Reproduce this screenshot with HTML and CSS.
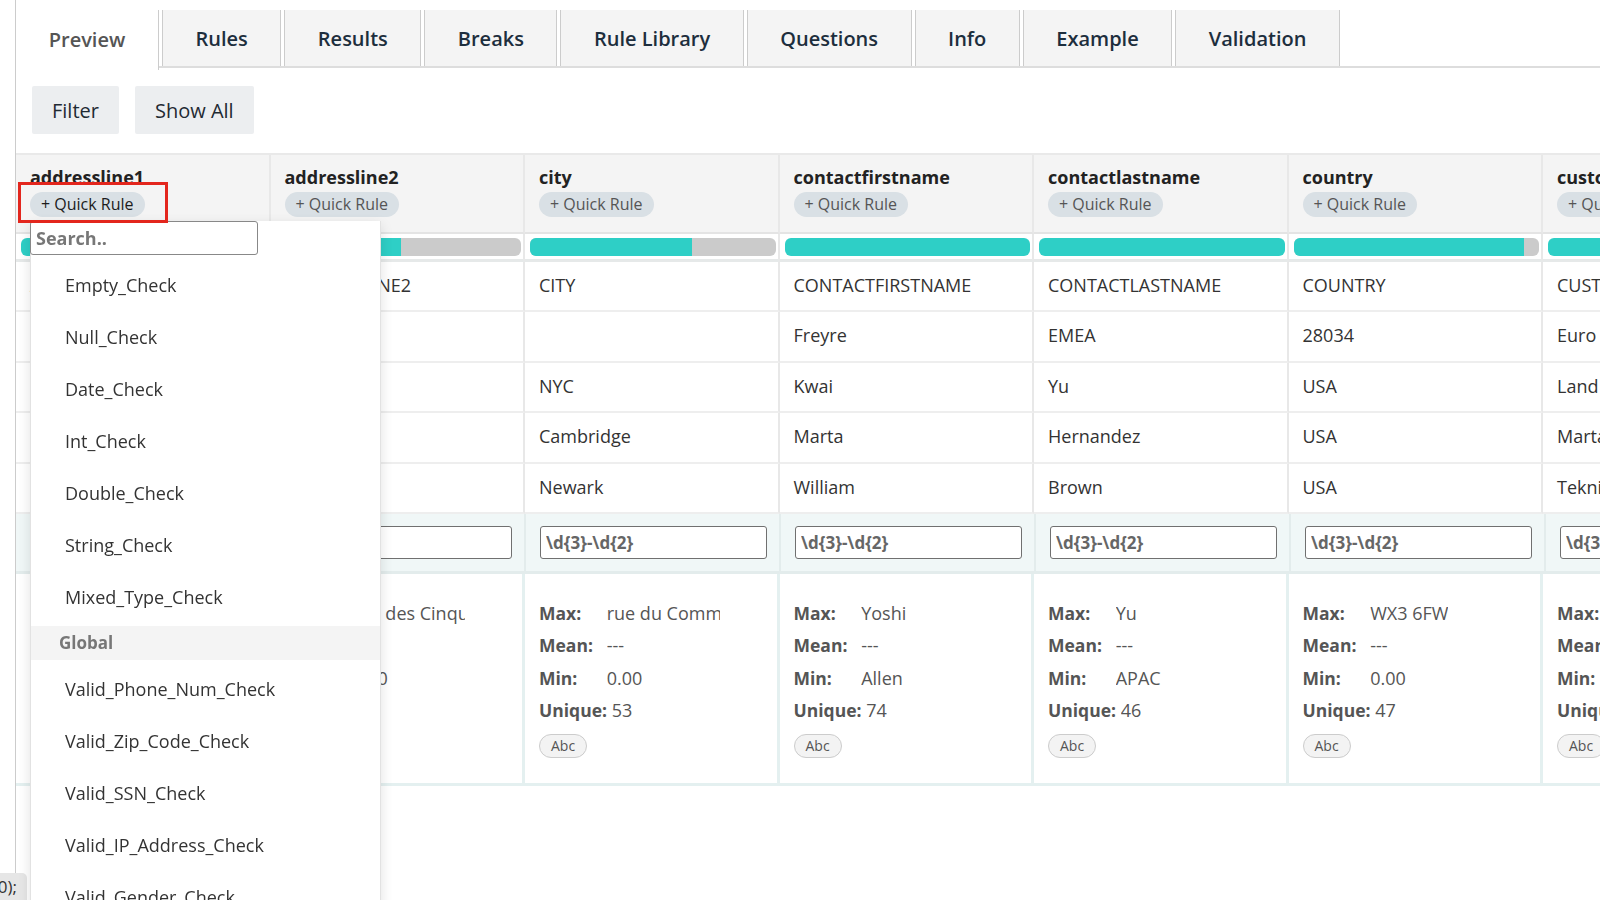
FILE: index.html
```html
<!DOCTYPE html>
<html lang="en">
<head>
    <meta charset="UTF-8">
    <title>Preview</title>
    <link rel="stylesheet" href="styles.css">
</head>
<body>
<div class="panel">
    <div class="tabs">
        <div class="tab active">Preview</div>
        <div class="tab">Rules</div>
        <div class="tab">Results</div>
        <div class="tab">Breaks</div>
        <div class="tab">Rule Library</div>
        <div class="tab">Questions</div>
        <div class="tab">Info</div>
        <div class="tab">Example</div>
        <div class="tab">Validation</div>
    </div>

    <div class="toolbar">
        <button class="btn">Filter</button>
        <button class="btn">Show All</button>
    </div>

    <div class="grid">
        <div class="row head">
            <div class="cell">
                <div class="col-name">addressline1</div>
                <span class="pill on">+ Quick Rule</span>
                <span class="marker"></span>
                <div class="dropdown">
                    <input class="search" type="text" placeholder="Search..">
                    <ul class="dd-list">
                        <li>Empty_Check</li>
                        <li>Null_Check</li>
                        <li>Date_Check</li>
                        <li>Int_Check</li>
                        <li>Double_Check</li>
                        <li>String_Check</li>
                        <li>Mixed_Type_Check</li>
                        <li class="dd-group">Global</li>
                        <li>Valid_Phone_Num_Check</li>
                        <li>Valid_Zip_Code_Check</li>
                        <li>Valid_SSN_Check</li>
                        <li>Valid_IP_Address_Check</li>
                        <li>Valid_Gender_Check</li>
                        <li>Valid_Email_Check</li>
                    </ul>
                </div>
            </div>
            <div class="cell"><div class="col-name">addressline2</div><span class="pill">+ Quick Rule</span></div>
            <div class="cell"><div class="col-name">city</div><span class="pill">+ Quick Rule</span></div>
            <div class="cell"><div class="col-name">contactfirstname</div><span class="pill">+ Quick Rule</span></div>
            <div class="cell"><div class="col-name">contactlastname</div><span class="pill">+ Quick Rule</span></div>
            <div class="cell"><div class="col-name">country</div><span class="pill">+ Quick Rule</span></div>
            <div class="cell"><div class="col-name">customername</div><span class="pill">+ Quick Rule</span></div>
        </div>

        <div class="row bars">
            <div class="cell"><div class="bar"><span style="width:100%"></span></div></div>
            <div class="cell"><div class="bar"><span style="width:51%"></span></div></div>
            <div class="cell"><div class="bar"><span style="width:66%"></span></div></div>
            <div class="cell"><div class="bar"><span style="width:100%"></span></div></div>
            <div class="cell"><div class="bar"><span style="width:100%"></span></div></div>
            <div class="cell"><div class="bar"><span style="width:94%"></span></div></div>
            <div class="cell"><div class="bar"><span style="width:100%"></span></div></div>
        </div>

        <div class="row data">
            <div class="cell">ADDRESSLINE1</div>
            <div class="cell">ADDRESSLINE2</div>
            <div class="cell">CITY</div>
            <div class="cell">CONTACTFIRSTNAME</div>
            <div class="cell">CONTACTLASTNAME</div>
            <div class="cell">COUNTRY</div>
            <div class="cell">CUSTOMERNAME</div>
        </div>
        <div class="row data">
            <div class="cell">54, rue Royale</div>
            <div class="cell"></div>
            <div class="cell"></div>
            <div class="cell">Freyre</div>
            <div class="cell">EMEA</div>
            <div class="cell">28034</div>
            <div class="cell">Euro Shopping Channel</div>
        </div>
        <div class="row data">
            <div class="cell">897 Long Airport Avenue</div>
            <div class="cell"></div>
            <div class="cell">NYC</div>
            <div class="cell">Kwai</div>
            <div class="cell">Yu</div>
            <div class="cell">USA</div>
            <div class="cell">Land of Toys Inc.</div>
        </div>
        <div class="row data">
            <div class="cell">39323 Spinnaker Dr.</div>
            <div class="cell"></div>
            <div class="cell">Cambridge</div>
            <div class="cell">Marta</div>
            <div class="cell">Hernandez</div>
            <div class="cell">USA</div>
            <div class="cell">Marta's Replicas Co.</div>
        </div>
        <div class="row data">
            <div class="cell">2304 Long Airport Avenue</div>
            <div class="cell"></div>
            <div class="cell">Newark</div>
            <div class="cell">William</div>
            <div class="cell">Brown</div>
            <div class="cell">USA</div>
            <div class="cell">Tekni Collectables Inc.</div>
        </div>

        <div class="row regex">
            <div class="cell"><input type="text" value="\d{3}-\d{2}"></div>
            <div class="cell"><input type="text" value="\d{3}-\d{2}"></div>
            <div class="cell"><input type="text" value="\d{3}-\d{2}"></div>
            <div class="cell"><input type="text" value="\d{3}-\d{2}"></div>
            <div class="cell"><input type="text" value="\d{3}-\d{2}"></div>
            <div class="cell"><input type="text" value="\d{3}-\d{2}"></div>
            <div class="cell"><input type="text" value="\d{3}-\d{2}"></div>
        </div>

        <div class="row stats">
            <div class="cell">
                <div class="stat"><b>Max:</b> <span class="v">Strada Provinciale</span></div>
                <div class="stat"><b>Mean:</b> <span class="v">---</span></div>
                <div class="stat"><b>Min:</b> <span class="v">1 rue Alsace</span></div>
                <div class="stat"><b>Unique:</b> <span class="v">92</span></div>
                <span class="tag">Abc</span>
            </div>
            <div class="cell">
                <div class="stat"><b>Max:</b> <span class="v">rue des Cinquante Otages</span></div>
                <div class="stat"><b>Mean:</b> <span class="v">---</span></div>
                <div class="stat"><b>Min:</b> <span class="v">0.00</span></div>
                <div class="stat"><b>Unique:</b> <span class="v">9</span></div>
                <span class="tag">Abc</span>
            </div>
            <div class="cell">
                <div class="stat"><b>Max:</b> <span class="v">rue du Commerce</span></div>
                <div class="stat"><b>Mean:</b> <span class="v">---</span></div>
                <div class="stat"><b>Min:</b> <span class="v">0.00</span></div>
                <div class="stat"><b>Unique:</b> <span class="v">53</span></div>
                <span class="tag">Abc</span>
            </div>
            <div class="cell">
                <div class="stat"><b>Max:</b> <span class="v">Yoshi</span></div>
                <div class="stat"><b>Mean:</b> <span class="v">---</span></div>
                <div class="stat"><b>Min:</b> <span class="v">Allen</span></div>
                <div class="stat"><b>Unique:</b> <span class="v">74</span></div>
                <span class="tag">Abc</span>
            </div>
            <div class="cell">
                <div class="stat"><b>Max:</b> <span class="v">Yu</span></div>
                <div class="stat"><b>Mean:</b> <span class="v">---</span></div>
                <div class="stat"><b>Min:</b> <span class="v">APAC</span></div>
                <div class="stat"><b>Unique:</b> <span class="v">46</span></div>
                <span class="tag">Abc</span>
            </div>
            <div class="cell">
                <div class="stat"><b>Max:</b> <span class="v">WX3 6FW</span></div>
                <div class="stat"><b>Mean:</b> <span class="v">---</span></div>
                <div class="stat"><b>Min:</b> <span class="v">0.00</span></div>
                <div class="stat"><b>Unique:</b> <span class="v">47</span></div>
                <span class="tag">Abc</span>
            </div>
            <div class="cell">
                <div class="stat"><b>Max:</b> <span class="v">Vitachrome Inc.</span></div>
                <div class="stat"><b>Mean:</b> <span class="v">---</span></div>
                <div class="stat"><b>Min:</b> <span class="v">Alpha Cognac</span></div>
                <div class="stat"><b>Unique:</b> <span class="v">92</span></div>
                <span class="tag">Abc</span>
            </div>
        </div>
    </div>
</div>

<div class="tip"><span>(0);</span></div>
</body>
</html>
```

FILE: styles.css
```css
*{
    box-sizing: border-box;
}
html, body{
    margin: 0;
    height: 900px;
    overflow: hidden;
    background: #fff;
}
body{
    font-family: "Open Sans", "Liberation Sans", sans-serif;
    color: #333;
}
.panel{
    margin-left: 15px;
    border-left: 1px solid #ccc;
    padding-top: 10px;
    height: 900px;
}

/* tabs */
.tabs{
    display: flex;
    height: 58px;
    border-bottom: 2px solid #ddd;
}
.tab{
    display: flex;
    align-items: center;
    padding: 0 32.5px;
    margin-left: 3px;
    background: #f4f4f4;
    border-left: 1px solid #ccc;
    border-right: 1px solid #ccc;
    font-size: 20px;
    font-weight: 600;
    color: #1d2e3d;
}
.tab.active{
    width: 143px;
    height: 60px;
    margin: 0 0 -2px 0;
    padding: 0 0 2px;
    justify-content: center;
    background: #fff;
    border-left: none;
    color: #555;
}

/* toolbar */
.toolbar{
    display: flex;
    gap: 16px;
    padding: 18px 0 0 16px;
}
.btn{
    height: 48px;
    padding: 0 20px;
    border: 0;
    border-radius: 2px;
    background: #eceef0;
    font-family: inherit;
    font-size: 20px;
    color: #1f2a33;
}

/* grid */
.grid{
    margin-top: 19px;
    border-top: 2px solid #e9e9e9;
}
.row{
    display: flex;
}
.cell{
    flex: 0 0 254.5px;
    border-right: 2px solid #e8e8e8;
}
.head .cell{
    position: relative;
    height: 79px;
    padding: 10px 13px 0 14px;
    background: #f4f4f4;
    border-bottom: 2px solid #e4e4e4;
}
.col-name{
    font-size: 18px;
    font-weight: 700;
    line-height: 24px;
    color: #222;
    white-space: nowrap;
}
.pill{
    display: inline-block;
    margin-top: 3px;
    height: 25px;
    line-height: 25px;
    padding: 0 11px;
    border-radius: 13px;
    background: #d9e0e5;
    color: #555;
    font-size: 16px;
    white-space: nowrap;
}
.pill.on{
    color: #1c1c1c;
}
.marker{
    position: absolute;
    left: 2px;
    top: 27px;
    width: 150px;
    height: 41px;
    border: 3px solid #e3261d;
    z-index: 6;
}

.bars .cell{
    height: 28px;
    padding: 4px 2px 0 5px;
    border-bottom: 3px solid #e6e9e9;
}
.bar{
    height: 18px;
    border-radius: 6px;
    background: #cbcbcb;
    overflow: hidden;
}
.bar span{
    display: block;
    height: 100%;
    background: #2ecfc6;
}

.data .cell{
    height: 50.4px;
    line-height: 47px;
    padding: 0 14px;
    border-bottom: 2px solid #eee;
    font-size: 18px;
    white-space: nowrap;
    overflow: hidden;
}

.regex .cell{
    height: 60px;
    padding: 12px 12px 0 14px;
    background: #f0f7f7;
    border-right-color: #e3ecec;
    border-bottom: 3px solid #e3ecec;
}
.regex input{
    width: 227px;
    height: 33px;
    padding: 0 5px;
    border: 1px solid #707070;
    border-radius: 3px;
    background: #fff;
    font-family: inherit;
    font-size: 17px;
    font-weight: 700;
    color: #666;
}

.stats .cell{
    height: 212px;
    padding: 23px 14px 0;
    border-right: 3px solid #e4f0f0;
    border-bottom: 3px solid #e4f0f0;
    font-size: 18px;
    color: #555;
}
.stat{
    line-height: 32.5px;
    white-space: nowrap;
}
.stat b{
    display: inline-block;
    min-width: 63px;
    font-size: 17.5px;
}
.stat .v{
    display: inline-block;
    max-width: 113px;
    overflow: hidden;
    vertical-align: top;
}
.tag{
    display: inline-block;
    margin-top: 7px;
    height: 24px;
    line-height: 22px;
    padding: 0 11px;
    border: 1px solid #ccc;
    border-radius: 12px;
    background: #f3f3f3;
    font-size: 14px;
    color: #555;
}

/* quick rule dropdown */
.dropdown{
    position: absolute;
    left: 14px;
    top: 66px;
    width: 351px;
    height: 720px;
    background: #fff;
    border: 1px solid #e2e2e2;
    border-top: none;
    box-shadow: 0 4px 12px rgba(0,0,0,.12);
    z-index: 5;
}
.search{
    display: block;
    width: 228px;
    height: 34px;
    margin-left: -1px;
    padding: 0 5px;
    border: 1px solid #888;
    border-radius: 3px;
    font-family: inherit;
    font-size: 18px;
    font-weight: 700;
    color: #333;
}
.search::placeholder{
    color: #777;
}
.dd-list{
    list-style: none;
    margin: 4px 0 0;
    padding: 0;
}
.dd-list li{
    height: 52px;
    line-height: 52px;
    padding-left: 34px;
    font-size: 18px;
    color: #333;
}
.dd-list li.dd-group{
    height: 34px;
    line-height: 34px;
    margin: 3px 0;
    padding-left: 28px;
    background: #f4f4f4;
    font-size: 17px;
    font-weight: 700;
    color: #777;
}

.tip{
    position: fixed;
    left: 0;
    bottom: 0;
    width: 27px;
    height: 27px;
    display: flex;
    justify-content: flex-end;
    align-items: center;
    padding-right: 10px;
    overflow: hidden;
    background: #e6e6e6;
    border-top-right-radius: 5px;
    font-size: 17px;
    color: #333;
    white-space: nowrap;
}
```
